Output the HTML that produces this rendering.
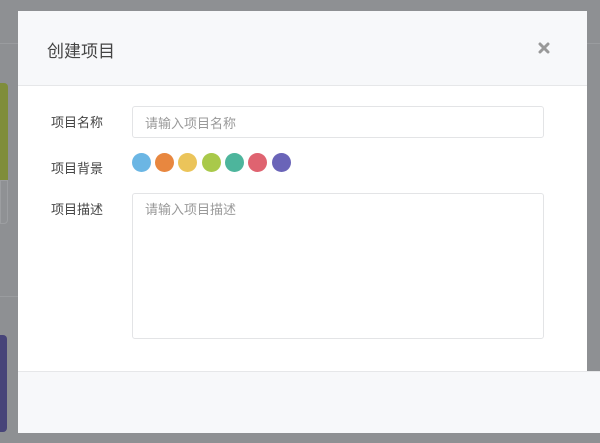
<!DOCTYPE html>
<html><head><meta charset="utf-8"><style>
*{margin:0;padding:0;box-sizing:border-box}
body{width:600px;height:443px;background:#8e9093;position:relative;overflow:hidden;font-family:"Liberation Sans","Noto Sans CJK SC",sans-serif}
.abs{position:absolute}
.lbl{position:absolute;left:51px;font-size:13px;color:#444}
.c{position:absolute;top:153px;width:19px;height:19px;border-radius:50%}
</style></head><body>
<div class="abs" style="left:0;top:43px;width:18px;height:1px;background:#9a9c9f"></div>
<div class="abs" style="left:0;top:83px;width:8px;height:97px;background:#7f8d3a;border-radius:0 4px 0 0"></div>
<div class="abs" style="left:0;top:180px;width:8px;height:44px;background:#8f9194;border-radius:0 0 4px 0;border:1px solid #9c9ea1"></div>
<div class="abs" style="left:0;top:296px;width:18px;height:1px;background:#9a9c9f"></div>
<div class="abs" style="left:0;top:335px;width:7px;height:97px;background:#474479;border-radius:0 4px 4px 0"></div>
<div class="abs" style="left:587px;top:43px;width:13px;height:1px;background:#9a9c9f"></div>
<div class="abs" style="left:18px;top:11px;width:569px;height:369px;background:#fff"></div>
<div class="abs" style="left:18px;top:11px;width:569px;height:75px;background:#f7f8fa;border-bottom:1px solid #e6e7e9"></div>
<div class="abs" style="left:47px;top:37px;font-size:17px;color:#444">创建项目</div>
<svg class="abs" style="left:538px;top:42px" width="12" height="12" viewBox="0 0 12 12"><path d="M2 2L10 10M10 2L2 10" stroke="#999" stroke-width="3" stroke-linecap="round"/></svg>
<div class="lbl" style="top:112px">项目名称</div>
<div class="abs" style="left:132px;top:106px;width:412px;height:32px;border:1px solid #e3e4e6;border-radius:3px;padding:6px 12px;font-size:13px;color:#999">请输入项目名称</div>
<div class="lbl" style="top:158px">项目背景</div>
<div class="c" style="left:132px;background:#6bb6e4"></div>
<div class="c" style="left:155px;background:#e8873f"></div>
<div class="c" style="left:178px;background:#ebc45a"></div>
<div class="c" style="left:202px;background:#a9c94a"></div>
<div class="c" style="left:225px;background:#4db59c"></div>
<div class="c" style="left:248px;background:#df6370"></div>
<div class="c" style="left:272px;background:#6a64b8"></div>
<div class="lbl" style="top:199px">项目描述</div>
<div class="abs" style="left:132px;top:193px;width:412px;height:146px;border:1px solid #e3e4e6;border-radius:3px;padding:5px 12px;font-size:13px;color:#999">请输入项目描述</div>
<div class="abs" style="left:18px;top:371px;width:582px;height:62px;background:#f7f8fa;border-top:1px solid #e6e7e9"></div>
</body></html>
